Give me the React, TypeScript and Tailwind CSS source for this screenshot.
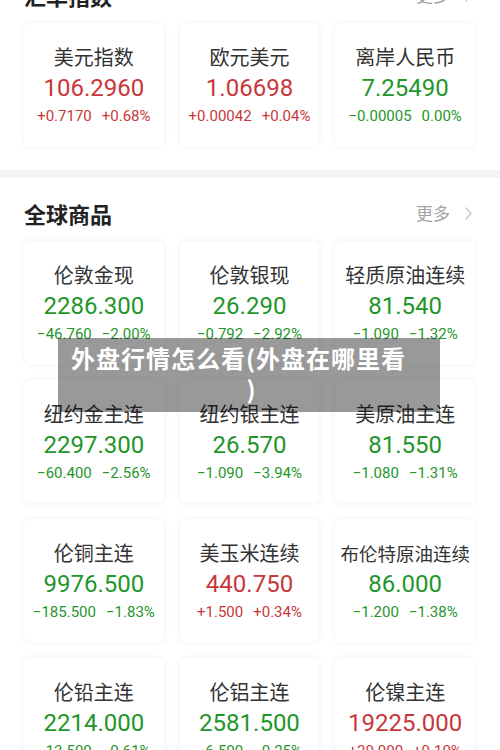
const CJK = "font-['Noto_Sans_CJK_SC','Noto_Sans',sans-serif]"
const NUM = "font-['Roboto','Noto_Sans_CJK_SC',sans-serif]"

type Quote = {
  name: string
  price: string
  change: string
  percent: string
  up: boolean
  small?: boolean
}

const fx: Quote[] = [
  { name: "美元指数", price: "106.2960", change: "+0.7170", percent: "+0.68%", up: true },
  { name: "欧元美元", price: "1.06698", change: "+0.00042", percent: "+0.04%", up: true },
  { name: "离岸人民币", price: "7.25490", change: "−0.00005", percent: "0.00%", up: false },
]

const goods: Quote[] = [
  { name: "伦敦金现", price: "2286.300", change: "−46.760", percent: "−2.00%", up: false },
  { name: "伦敦银现", price: "26.290", change: "−0.792", percent: "−2.92%", up: false },
  { name: "轻质原油连续", price: "81.540", change: "−1.090", percent: "−1.32%", up: false },
  { name: "纽约金主连", price: "2297.300", change: "−60.400", percent: "−2.56%", up: false },
  { name: "纽约银主连", price: "26.570", change: "−1.090", percent: "−3.94%", up: false },
  { name: "美原油主连", price: "81.550", change: "−1.080", percent: "−1.31%", up: false },
  { name: "伦铜主连", price: "9976.500", change: "−185.500", percent: "−1.83%", up: false },
  { name: "美玉米连续", price: "440.750", change: "+1.500", percent: "+0.34%", up: true },
  { name: "布伦特原油连续", price: "86.000", change: "−1.200", percent: "−1.38%", up: false, small: true },
  { name: "伦铅主连", price: "2214.000", change: "−13.500", percent: "−0.61%", up: false },
  { name: "伦铝主连", price: "2581.500", change: "−6.500", percent: "−0.25%", up: false },
  { name: "伦镍主连", price: "19225.000", change: "+20.000", percent: "+0.10%", up: true },
]

function SectionHeader({ title }: { title: string }) {
  return (
    <div className="flex h-[30px] items-center justify-between pr-[3px]">
      <h2 className={`${CJK} text-[22px] font-bold leading-[30px] text-[#222]`}>{title}</h2>
      <div className="flex items-center gap-[15px]">
        <span className={`${CJK} text-[17px] text-[#a3a3a3]`}>更多</span>
        <svg width="7" height="13" viewBox="0 0 7 13" fill="none">
          <path d="M1 1l5 5.5L1 12" stroke="#c4c4c4" strokeWidth="1.3" strokeLinecap="round" strokeLinejoin="round" />
        </svg>
      </div>
    </div>
  )
}

function QuoteCard({ q, height }: { q: Quote; height: string }) {
  const color = q.up ? "text-[#c8373a]" : "text-[#1f962a]"
  return (
    <div
      className={`flex flex-col items-center rounded-[6px] bg-white pt-[20px] shadow-[0_0_6px_rgba(0,0,0,0.07)] ${height}`}
    >
      <div
        className={`${CJK} whitespace-nowrap leading-[28px] text-[#333] ${
          q.small ? "text-[18.5px]" : "text-[20px]"
        }`}
      >
        {q.name}
      </div>
      <div className={`${NUM} ${color} mt-[2px] text-[24px] leading-[30px] whitespace-nowrap`}>{q.price}</div>
      <div className={`${NUM} ${color} mt-[3px] flex gap-[10px] text-[15px] leading-[20px] whitespace-nowrap`}>
        <span>{q.change}</span>
        <span>{q.percent}</span>
      </div>
    </div>
  )
}

export default function App() {
  return (
    <div className="relative h-[750px] w-[500px] overflow-hidden bg-white">
      <section className="-mt-[40px] pb-[23px] pl-[24px] pr-[25px] pt-[20px]">
        <SectionHeader title="汇率指数" />
        <div className="mt-[13px] grid grid-cols-3 gap-[16px]">
          {fx.map((q) => (
            <QuoteCard key={q.name} q={q} height="h-[124px]" />
          ))}
        </div>
      </section>

      <div className="h-[8px] bg-[#f5f5f5]" />

      <section className="pl-[24px] pr-[25px] pt-[20px]">
        <SectionHeader title="全球商品" />
        <div className="mt-[13px] grid grid-cols-3 gap-x-[16px] gap-y-[16px]">
          {goods.map((q) => (
            <QuoteCard key={q.name} q={q} height="h-[123px]" />
          ))}
        </div>
      </section>

      {/* title banner over the page */}
      <div className="absolute left-[58px] top-[338px] h-[74px] w-[382px] bg-[rgba(0,0,0,0.4)] pl-[13px] pr-[8px] pt-[4px]">
        <p className={`${CJK} text-[24px] font-bold leading-[31px] tracking-[1px] text-white`}>
          <span className="block whitespace-nowrap text-left">外盘行情怎么看(外盘在哪里看</span>
          <span className="block text-center">)</span>
        </p>
      </div>
    </div>
  )
}
